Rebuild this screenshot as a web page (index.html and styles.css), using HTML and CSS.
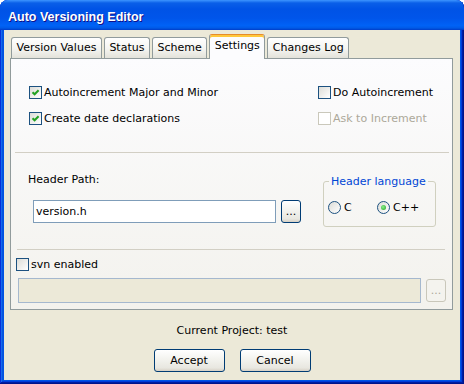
FILE: index.html
```html
<!DOCTYPE html>
<html lang="en">
<head>
  <meta charset="UTF-8">
  <title>Auto Versioning Editor</title>
  <link rel="stylesheet" href="styles.css">
</head>
<body>
  <div class="window">
    <div class="titlebar">Auto Versioning Editor</div>

    <div class="client">
      <div class="tabs">
        <div class="tab">Version Values</div>
        <div class="tab">Status</div>
        <div class="tab">Scheme</div>
        <div class="tab active">Settings</div>
        <div class="tab">Changes Log</div>
      </div>

      <div class="panel">
        <!-- increment options -->
        <div class="opts">
          <label class="check"><span class="box"><svg viewBox="0 0 11 11"><path d="M2.5 5.2 L4.6 7.3 L8.6 3.2" /></svg></span>Autoincrement Major and Minor</label>
          <label class="check"><span class="box"></span>Do Autoincrement</label>
          <label class="check"><span class="box"><svg viewBox="0 0 11 11"><path d="M2.5 5.2 L4.6 7.3 L8.6 3.2" /></svg></span>Create date declarations</label>
          <label class="check disabled"><span class="box"></span>Ask to Increment</label>
        </div>

        <div class="sep"></div>

        <div class="header-row">
          <div class="path">
            <div class="label">Header Path:</div>
            <div class="field">
              <div class="input">version.h</div>
              <button class="btn dots">...</button>
            </div>
          </div>
          <fieldset class="group">
            <legend>Header language</legend>
            <div class="radios">
              <label class="radio"><span class="ring"></span>C</label>
              <label class="radio"><span class="ring on"></span>C++</label>
            </div>
          </fieldset>
        </div>

        <div class="sep sep2"></div>

        <label class="check svn"><span class="box"></span>svn enabled</label>
        <div class="field svn-field">
          <div class="input off"></div>
          <button class="btn dots off">...</button>
        </div>
      </div>

      <div class="project">Current Project: test</div>
      <div class="actions">
        <button class="btn">Accept</button>
        <button class="btn">Cancel</button>
      </div>
    </div>
  </div>
</body>
</html>
```

FILE: styles.css
```css
* {
  box-sizing: border-box;
}

body {
  margin: 0;
  font-family: "DejaVu Sans", sans-serif;
  font-size: 11px;
  color: #000;
  background: #fff;
}

.window {
  width: 464px;
  height: 384px;
  padding: 0 4px 4px;
  display: flex;
  flex-direction: column;
  background: #0055e5;
  border-radius: 8px 8px 0 0;
  box-shadow: inset -1px -1px #00138c, inset 1px 1px #0831d9,
    inset -2px -2px #001ea0, inset 2px 2px #166aee,
    inset -3px -3px #003bda, inset 3px 3px #0855dd;
}

.titlebar {
  height: 30px;
  margin: 0 -4px;
  padding: 3px 0 0 8px;
  display: flex;
  align-items: center;
  border-radius: 8px 8px 0 0;
  background: linear-gradient(180deg, #3d95ff 0%, #0a5fe8 10%, #0053e6 30%, #0055ea 60%, #0062f6 85%, #005be8 93%, #003dc8 100%);
  color: #fff;
  font: bold 12.5px "Liberation Sans", sans-serif;
  text-shadow: 1px 1px #0f1089;
}

.client {
  flex: 1;
  display: flex;
  flex-direction: column;
  background: #ece9d8;
}

/* tabs */
.tabs {
  display: flex;
  align-items: flex-end;
  gap: 2px;
  margin: 4px 0 0 7px;
  position: relative;
  z-index: 1;
}

.tab {
  height: 21px;
  padding: 0 4.5px;
  line-height: 20px;
  border: 1px solid #919b9c;
  border-bottom: 0;
  border-radius: 3px 3px 0 0;
  background: linear-gradient(#ffffff, #f4f4f0 55%, #e3e2da);
  white-space: nowrap;
}

.tab.active {
  height: 25px;
  margin-bottom: -1px;
  line-height: 21px;
  border-top-color: #e68b2c;
  background: #fcfcfe;
  box-shadow: inset 0 2px #ffc83c;
}

.panel {
  height: 252px;
  margin: 0 7px 0 6px;
  border: 1px solid #919b9c;
  background: linear-gradient(#fcfcfe, #f3f2ed);
}

/* checkboxes */
.opts {
  display: grid;
  grid-template-columns: 289px auto;
  row-gap: 13px;
  padding: 27px 0 0 18px;
}

.check {
  height: 13px;
  display: flex;
  align-items: center;
  gap: 2px;
  line-height: 13px;
  white-space: nowrap;
}

.box {
  width: 13px;
  height: 13px;
  flex: none;
  border: 1px solid #1c5180;
  background: linear-gradient(135deg, #dcdcd7, #ffffff);
}

.box svg {
  display: block;
  width: 11px;
  height: 11px;
}

.box path {
  fill: none;
  stroke: #21a121;
  stroke-width: 2;
}

.check.disabled {
  color: #aca899;
}

.check.disabled .box {
  border-color: #cac8bb;
  background: #fff;
}

.sep {
  margin: 27px 3px 0 4px;
  border-top: 1px solid #d2cfc4;
}

.sep2 {
  margin: 22px 7px 0 6px;
}

/* header path */
.header-row {
  display: flex;
  align-items: flex-start;
}

.path {
  padding: 20px 0 0 17px;
}

.label {
  line-height: 13px;
}

.field {
  display: flex;
  align-items: center;
  gap: 5px;
  margin: 14px 0 0 5px;
}

.input {
  width: 243px;
  height: 23px;
  padding: 0 2px;
  line-height: 21px;
  border: 1px solid #7f9db9;
  background: #fff;
}

.btn {
  width: 71px;
  height: 23px;
  padding: 0;
  font: inherit;
  color: #000;
  border: 1px solid #003c74;
  border-radius: 3px;
  background: linear-gradient(#ffffff, #f4f4f0 40%, #e8e7e0 85%, #d6d0c5);
}

.btn.dots {
  width: 20px;
  line-height: 19px;
}

.group {
  width: 113px;
  margin: 22px 16px 0 auto;
  padding: 13px 0 12px 4px;
  border: 1px solid #d0d0bf;
  border-radius: 3px;
  min-width: 0;
}

.group legend {
  margin-left: 1px;
  padding: 0 2px;
  line-height: 13px;
  color: #0046d5;
}

.radios {
  display: flex;
}

.radio {
  width: 49px;
  height: 13px;
  display: flex;
  align-items: center;
  gap: 3px;
  line-height: 13px;
}

.ring {
  width: 13px;
  height: 13px;
  flex: none;
  display: flex;
  align-items: center;
  justify-content: center;
  border: 1px solid #1c5180;
  border-radius: 50%;
  background: linear-gradient(135deg, #dcdcd7, #ffffff);
}

.ring.on::after {
  content: "";
  width: 5px;
  height: 5px;
  border-radius: 50%;
  background: radial-gradient(circle at 40% 40%, #8bf08b, #21a121);
}

/* svn */
.check.svn {
  margin: 8px 0 0 5px;
}

.svn-field {
  margin: 7px 0 0 7px;
}

.input.off {
  width: 403px;
  height: 25px;
  border-color: #a5b8ce;
  background: #ece9d8;
}

.btn.off {
  color: #aca899;
  border-color: #c9c7ba;
  background: #f4f3ee;
}

/* footer */
.project {
  margin-top: 14px;
  line-height: 13px;
  text-align: center;
}

.actions {
  display: flex;
  justify-content: center;
  gap: 15px;
  margin-top: 12px;
}
```
